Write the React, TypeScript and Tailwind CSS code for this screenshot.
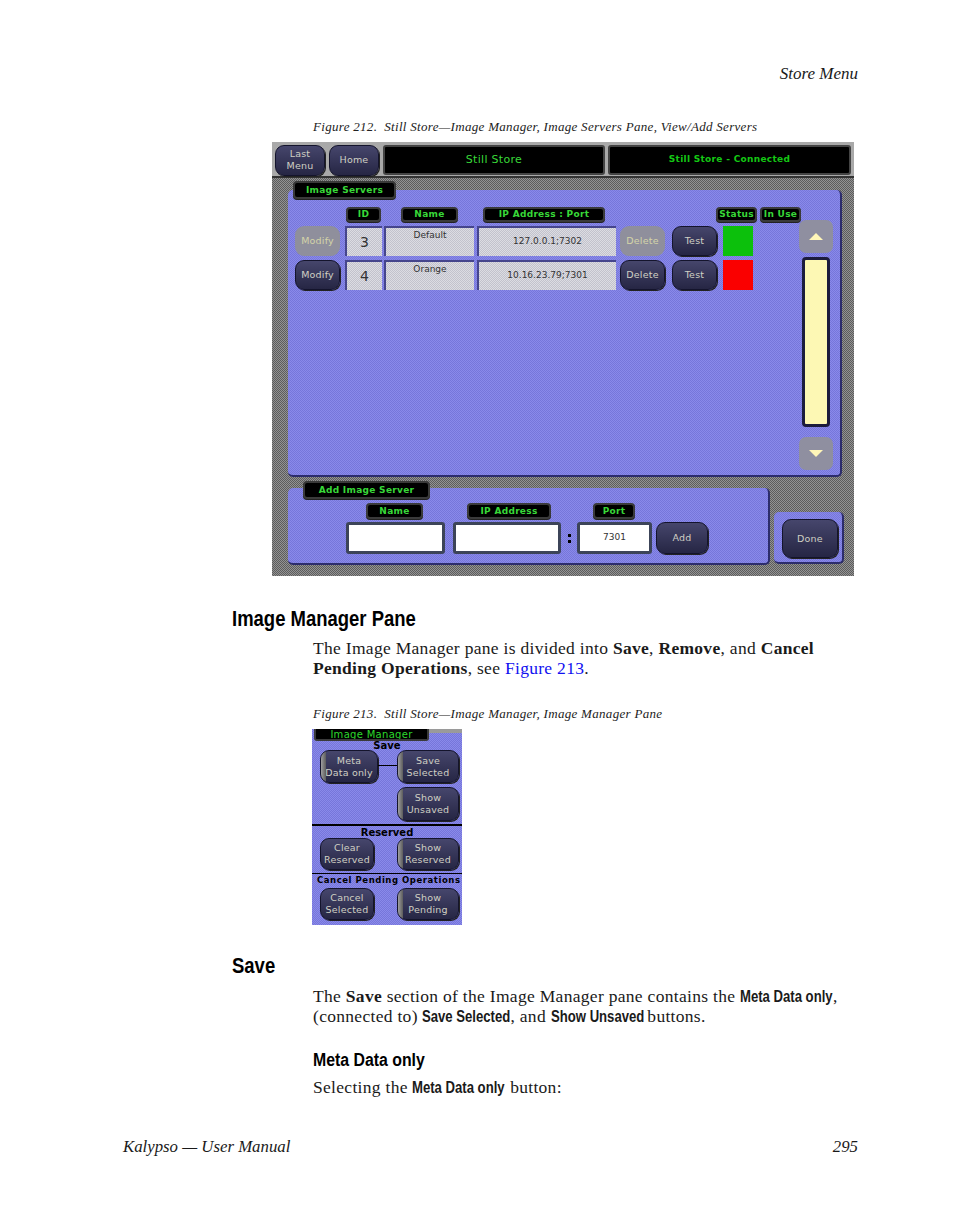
const purple =
  'bg-[repeating-conic-gradient(#8a8aea_0_25%,#7676da_0_50%)] bg-[length:2px_2px]';
const grey =
  'bg-[repeating-conic-gradient(#939393_0_25%,#5c5c5c_0_50%)] bg-[length:2px_2px]';
const cellBg =
  'bg-[repeating-conic-gradient(#dcdce2_0_25%,#c2c2cc_0_50%)] bg-[length:2px_2px]';
const narrow = "font-['Liberation_Sans',sans-serif] font-bold tracking-normal";
const uiFont = "font-['DejaVu_Sans',sans-serif]";

function Label({ text, className }: { text: string; className: string }) {
  return (
    <div
      className={`flex items-center justify-center rounded-[4px] border-2 border-[#3a3a3a] bg-black text-[9px] font-bold leading-none tracking-[0.3px] text-[#38d838] shadow-[0_1px_0_#222] ${uiFont} ${className}`}
    >
      {text}
    </div>
  );
}

function Btn({
  text,
  className = '',
  disabled = false,
  grip = false,
}: {
  text: string;
  className?: string;
  disabled?: boolean;
  grip?: boolean;
}) {
  return (
    <div
      className={`relative flex items-center justify-center overflow-hidden whitespace-pre-line text-center text-[9.5px] leading-[12px] tracking-[0.2px] ${uiFont} ${
        disabled
          ? 'rounded-[9px] bg-[#8f8f9c] text-[#d4d4a8]'
          : 'rounded-[9px] border border-[#14142c] bg-gradient-to-b from-[#46466c] to-[#262644] text-[#d0d0c4] shadow-[1px_1px_0_#222]'
      } ${className}`}
    >
      {grip && <div className="absolute inset-y-0 left-0 w-[5px] bg-gradient-to-r from-[#a0a0a0] to-[#5c5c5c]" />}
      {text}
    </div>
  );
}

function Cell({ children, className = '' }: { children: React.ReactNode; className?: string }) {
  return (
    <div
      className={`flex h-[30px] justify-center border-l-2 border-t-2 border-[#45458c] text-[#333] ${cellBg} ${uiFont} ${className}`}
    >
      {children}
    </div>
  );
}

function ServerRow({
  id,
  name,
  address,
  status,
  disabled,
}: {
  id: string;
  name: string;
  address: string;
  status: string;
  disabled: boolean;
}) {
  return (
    <div className="flex h-[30px] items-stretch">
      <Btn text="Modify" disabled={disabled} className="ml-[7px] w-[45px]" />
      <Cell className="ml-[5px] w-[37px] items-center text-[14px]">{id}</Cell>
      <Cell className="ml-[2px] w-[90px] pt-[1px] text-[9px]">{name}</Cell>
      <Cell className="ml-[3px] w-[139px] items-center text-[9px]">{address}</Cell>
      <Btn text="Delete" disabled={disabled} className="ml-[4px] w-[45px]" />
      <Btn text="Test" className="ml-[7px] w-[45px]" />
      <div className={`ml-[6px] w-[30px] ${status}`} />
    </div>
  );
}

function ScrollBtn({ up }: { up: boolean }) {
  return (
    <div className="flex h-[33px] w-[34px] items-center justify-center rounded-[7px] bg-[#8f8fa0]">
      <svg width="14" height="8" viewBox="0 0 14 8">
        <path d={up ? 'M7 0L14 7H0Z' : 'M0 0H14L7 7Z'} fill="#fff6b8" />
      </svg>
    </div>
  );
}

function StillStoreFigure() {
  return (
    <div className={`ml-[272px] flex h-[434px] w-[582px] flex-col ${grey}`}>
      {/* top bar */}
      <div className="flex h-[36px] items-center gap-[4px] border-b-2 border-[#333] bg-[#a9a9a9] pl-[3px] pr-[3px] pt-[2px]">
        <Btn text={'Last\nMenu'} className="h-[31px] w-[50px]" />
        <Btn text="Home" className="h-[31px] w-[50px]" />
        <div className={`flex h-[30px] w-[222px] items-center justify-center rounded-[3px] border-2 border-[#444] bg-black text-[11px] tracking-[0.3px] text-[#38d838] ${uiFont}`}>
          Still Store
        </div>
        <div className={`-ml-[1px] flex h-[30px] w-[243px] items-center justify-center rounded-[3px] border-2 border-[#444] bg-black text-[9px] font-bold tracking-[0.3px] text-[#14c814] ${uiFont}`}>
          Still Store - Connected
        </div>
      </div>

      {/* image servers panel */}
      <div className="mt-[3px] flex items-start">
        <div className="w-[21px]" />
        <Label text="Image Servers" className="z-10 h-[18px] w-[103px]" />
      </div>
      <div className={`relative -mt-[9px] ml-[16px] h-[287px] w-[554px] rounded-[5px] border-b-2 border-r-2 border-[#2c2c6c] ${purple}`}>
        <div className="flex h-[34px] items-end pb-[2px]">
          <Label text="ID" className="ml-[58px] h-[15px] w-[35px]" />
          <Label text="Name" className="ml-[20px] h-[15px] w-[57px]" />
          <Label text="IP Address : Port" className="ml-[25px] h-[15px] w-[122px]" />
          <Label text="Status" className="ml-[111px] h-[15px] w-[41px]" />
          <Label text="In Use" className="ml-[3px] h-[15px] w-[41px]" />
        </div>
        <div className="mt-[2px] flex flex-col gap-[4px]">
          <ServerRow id="3" name="Default" address="127.0.0.1;7302" status="bg-[#0cc00c]" disabled />
          <ServerRow id="4" name="Orange" address="10.16.23.79;7301" status="bg-[#fa0000]" disabled={false} />
        </div>
        {/* scroll column, lies over the empty right of the table */}
        <div className="absolute left-[511px] top-[30px] flex flex-col items-center gap-[4px]">
          <ScrollBtn up />
          <div className="h-[170px] w-[28px] rounded-[4px] border-[3px] border-[#1c1c3c] bg-[#fdf8b4]" />
          <div className="h-[2px]" />
          <ScrollBtn up={false} />
        </div>
      </div>

      {/* lower panels */}
      <div className="mt-[4px] flex items-start">
        <div className="flex flex-col">
          <Label text="Add Image Server" className="z-10 ml-[31px] h-[18px] w-[127px]" />
          <div className={`-mt-[11px] ml-[16px] h-[77px] w-[482px] rounded-[5px] border-b-2 border-r-2 border-[#2c2c6c] ${purple}`}>
            <div className="flex h-[31px] items-end">
              <Label text="Name" className="ml-[78px] h-[16px] w-[57px]" />
              <Label text="IP Address" className="ml-[44px] h-[16px] w-[84px]" />
              <Label text="Port" className="ml-[42px] h-[16px] w-[42px]" />
            </div>
            <div className="mt-[3px] flex h-[32px] items-stretch">
              <div className="ml-[58px] w-[99px] rounded-[3px] border-[3px] border-[#3c4458] bg-white" />
              <div className="ml-[8px] w-[108px] rounded-[3px] border-[3px] border-[#3c4458] bg-white" />
              <div className="flex w-[16px] flex-col items-center justify-center gap-[3px]">
                <div className="h-[3px] w-[3px] bg-black" />
                <div className="h-[3px] w-[3px] bg-black" />
              </div>
              <div className={`flex w-[75px] items-center justify-center rounded-[3px] border-[3px] border-[#3c4458] bg-white text-[9px] text-[#333] ${uiFont}`}>
                7301
              </div>
              <Btn text="Add" className="ml-[4px] w-[52px]" />
            </div>
          </div>
        </div>
        <div className={`ml-[4px] mt-[31px] flex h-[52px] w-[70px] items-start rounded-[5px] border-b-2 border-r-2 border-[#2c2c6c] pl-[8px] pt-[7px] ${purple}`}>
          <Btn text="Done" className="h-[39px] w-[56px]" />
        </div>
      </div>
    </div>
  );
}

function ImageManagerFigure() {
  const heading = `text-center text-[10px] font-bold leading-none text-black ${uiFont}`;
  return (
    <div className={`ml-[312px] flex h-[196px] w-[150px] flex-col ${purple}`}>
      <div className="flex items-start">
        <div className={`ml-[2px] flex h-[12px] w-[115px] items-start justify-center overflow-hidden rounded-b-[3px] border-x-2 border-b-2 border-[#3a3a3a] bg-black text-[10px] leading-[11px] tracking-[0.3px] text-[#2cd82c] ${uiFont}`}>
          Image Manager
        </div>
        <div className="h-[4px] flex-1 bg-[#9a9a9a]" />
      </div>
      <div className={`${heading} h-[9px]`}>Save</div>
      <div className="relative flex h-[33px] items-stretch justify-between pl-[8px] pr-[3px]">
        <Btn text={'Meta\nData only'} grip className="w-[58px]" />
        <div className="absolute left-[66px] top-[15px] h-[1px] w-[19px] bg-black" />
        <Btn text={'Save\nSelected'} grip className="w-[62px]" />
      </div>
      <div className="mt-[4px] flex h-[34px] justify-end pr-[3px]">
        <Btn text={'Show\nUnsaved'} grip className="w-[62px]" />
      </div>
      <div className="mt-[3px] h-[2px] bg-black" />
      <div className={`${heading} mt-[2px] h-[9px]`}>Reserved</div>
      <div className="mt-[1px] flex h-[32px] justify-between pl-[8px] pr-[3px]">
        <Btn text={'Clear\nReserved'} className="w-[54px]" />
        <Btn text={'Show\nReserved'} grip className="w-[62px]" />
      </div>
      <div className="mt-[3px] h-[1px] bg-black" />
      <div className={`mt-[2px] h-[11px] whitespace-nowrap pl-[5px] text-[8.5px] font-bold leading-none tracking-[0.55px] text-black ${uiFont}`}>
        Cancel Pending Operations
      </div>
      <div className="mt-[1px] flex h-[32px] justify-between pl-[8px] pr-[3px]">
        <Btn text={'Cancel\nSelected'} className="w-[54px]" />
        <Btn text={'Show\nPending'} grip className="w-[62px]" />
      </div>
    </div>
  );
}

function Caption({ children }: { children: React.ReactNode }) {
  return (
    <p className="ml-[313px] whitespace-pre text-[13px] italic leading-[16px] tracking-[0.3px] text-[#222]">
      {children}
    </p>
  );
}

// the manual's condensed face is not installed, so Arial bold gets squeezed
function Cond({ text, className }: { text: string; className: string }) {
  return (
    <span className={`inline-block origin-left scale-x-[0.82] whitespace-nowrap text-[16px] leading-none ${narrow} ${className}`}>
      {text}
    </span>
  );
}

export default function App() {
  const body = 'ml-[313px] whitespace-nowrap text-[17.5px] tracking-[0.3px]';
  return (
    <div className="flex h-[1227px] w-[954px] flex-col overflow-hidden bg-white font-['Liberation_Serif',serif] text-[#1a1a1a]">
      <div className="mt-[64px] pr-[96px] text-right text-[17px] italic leading-[20px]">Store Menu</div>
      <div className="mt-[35px]">
        <Caption>Figure 212.  Still Store—Image Manager, Image Servers Pane, View/Add Servers</Caption>
      </div>
      <div className="mt-[7px]">
        <StillStoreFigure />
      </div>

      <h2 className={`ml-[232px] mt-[30px] origin-left scale-x-[0.84] whitespace-nowrap text-[22px] leading-[26px] text-black ${narrow}`}>
        Image Manager Pane
      </h2>
      <p className={`${body} mt-[6px] leading-[20px]`}>
        The Image Manager pane is divided into <b>Save</b>, <b>Remove</b>, and <b>Cancel</b>
        <br />
        <b>Pending Operations</b>, see <span className="text-[#1010f0]">Figure 213</span>.
      </p>
      <div className="mt-[28px]">
        <Caption>Figure 213.  Still Store—Image Manager, Image Manager Pane</Caption>
      </div>
      <div className="mt-[7px]">
        <ImageManagerFigure />
      </div>

      <h2 className={`ml-[232px] mt-[28px] origin-left scale-x-[0.84] whitespace-nowrap text-[22px] leading-[26px] text-black ${narrow}`}>
        Save
      </h2>
      <p className={`${body} mt-[8px] leading-[19.5px]`}>
        The <b>Save</b> section of the Image Manager pane contains the <Cond text="Meta Data only" className="w-[93px]" />,
        <br />
        (connected to) <Cond text="Save Selected" className="w-[88px]" />, and <Cond text="Show Unsaved" className="w-[92px]" /> buttons.
      </p>
      <h3 className={`ml-[313px] mt-[23px] origin-left scale-x-[0.88] whitespace-nowrap text-[18px] leading-[22px] text-black ${narrow}`}>
        Meta Data only
      </h3>
      <p className={`${body} mt-[6px] leading-[20px]`}>
        Selecting the <Cond text="Meta Data only" className="w-[93px]" /> button:
      </p>

      <div className="ml-[123px] mr-[96px] mt-[40px] flex justify-between text-[16.8px] italic leading-[20px]">
        <span>Kalypso — User Manual</span>
        <span>295</span>
      </div>
    </div>
  );
}
